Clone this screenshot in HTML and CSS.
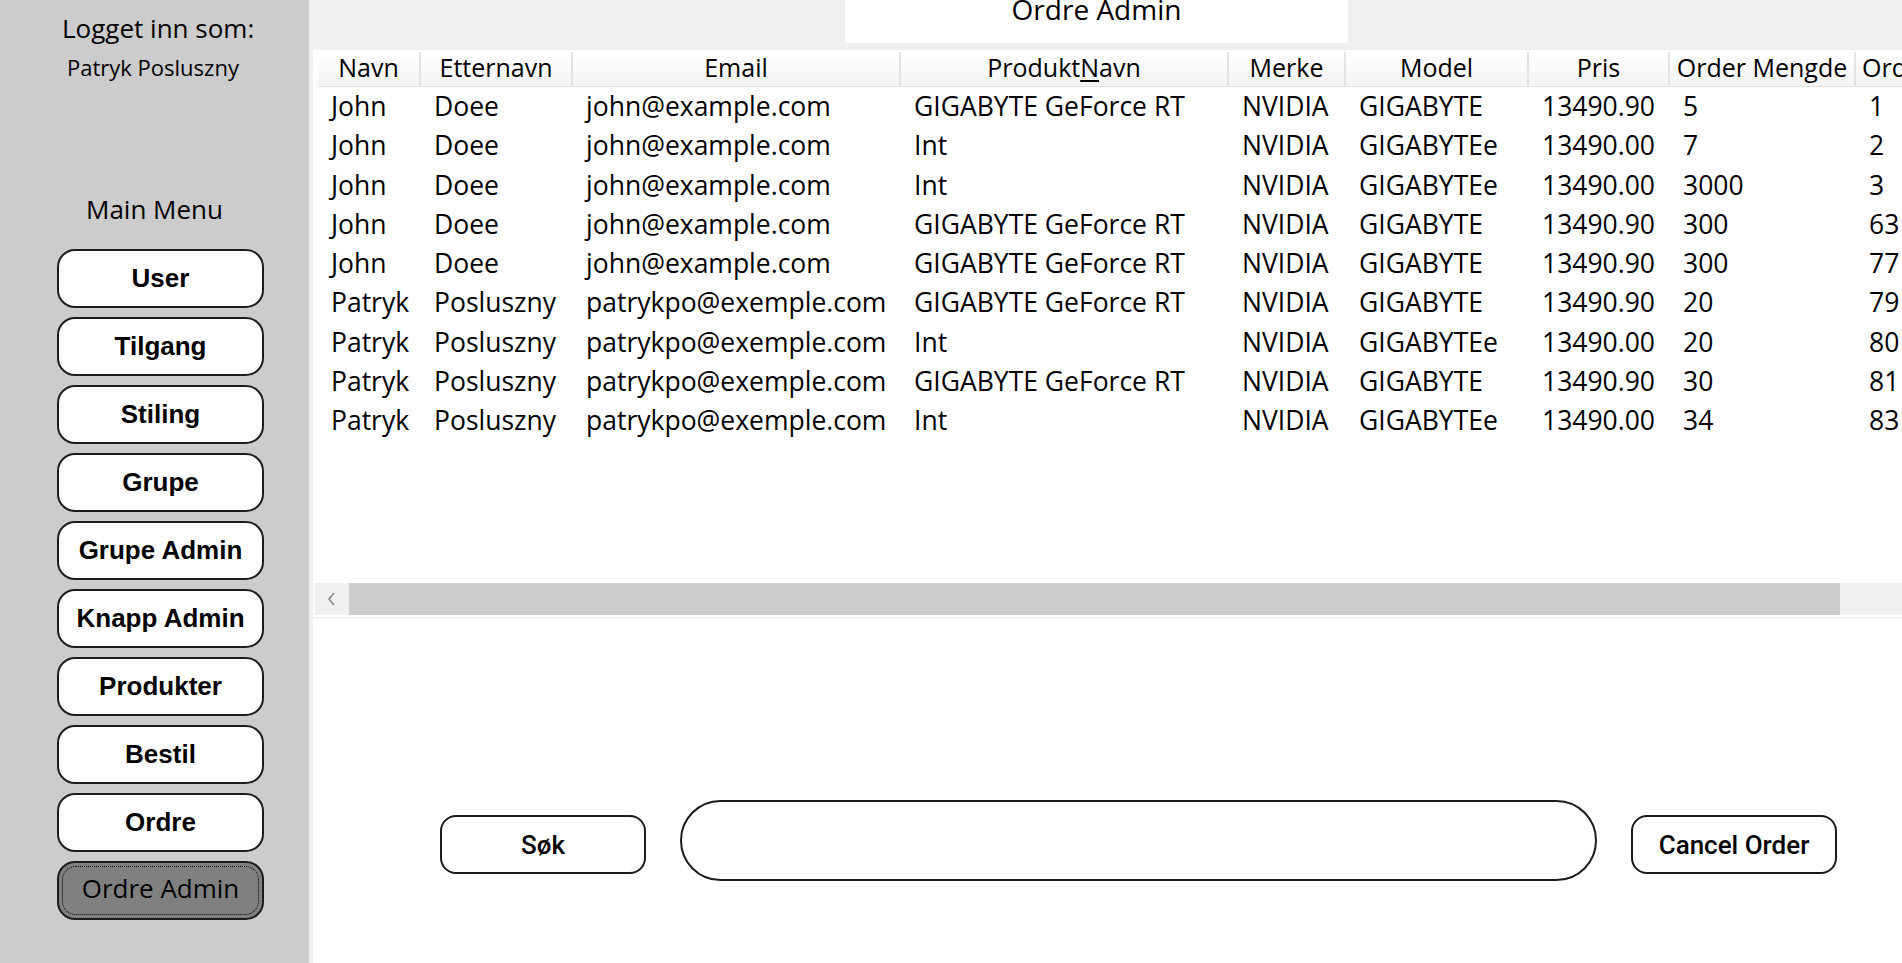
FILE: index.html
```html
<!DOCTYPE html>
<html lang="no">
<head>
<meta charset="utf-8">
<title>Ordre Admin</title>
<link rel="stylesheet" href="styles.css">
</head>
<body>
<div class="app">
  <aside class="sidebar">
    <div class="logged">Logget inn som:</div>
    <div class="username">Patryk Posluszny</div>
    <div class="menu-title">Main Menu</div>
    <nav class="menu">
      <button class="menu-btn">User</button>
      <button class="menu-btn">Tilgang</button>
      <button class="menu-btn">Stiling</button>
      <button class="menu-btn">Grupe</button>
      <button class="menu-btn">Grupe Admin</button>
      <button class="menu-btn">Knapp Admin</button>
      <button class="menu-btn">Produkter</button>
      <button class="menu-btn">Bestil</button>
      <button class="menu-btn">Ordre</button>
      <button class="menu-btn active">Ordre Admin</button>
    </nav>
  </aside>
  <main class="main">
    <div class="topbar">
      <div class="title">Ordre Admin</div>
    </div>
    <div class="grid">
      <div class="row head">
        <div class="hc">Navn</div>
        <div class="hc">Etternavn</div>
        <div class="hc">Email</div>
        <div class="hc">Produkt<u>N</u>avn</div>
        <div class="hc">Merke</div>
        <div class="hc">Model</div>
        <div class="hc">Pris</div>
        <div class="hc">Order Mengde</div>
        <div class="hc last">Ordre ID</div>
      </div>
      <div class="row"><div class="c">John</div><div class="c">Doee</div><div class="c">john@example.com</div><div class="c">GIGABYTE GeForce RT</div><div class="c">NVIDIA</div><div class="c">GIGABYTE</div><div class="c">13490.90</div><div class="c">5</div><div class="c">1</div></div>
      <div class="row"><div class="c">John</div><div class="c">Doee</div><div class="c">john@example.com</div><div class="c">Int</div><div class="c">NVIDIA</div><div class="c">GIGABYTEe</div><div class="c">13490.00</div><div class="c">7</div><div class="c">2</div></div>
      <div class="row"><div class="c">John</div><div class="c">Doee</div><div class="c">john@example.com</div><div class="c">Int</div><div class="c">NVIDIA</div><div class="c">GIGABYTEe</div><div class="c">13490.00</div><div class="c">3000</div><div class="c">3</div></div>
      <div class="row"><div class="c">John</div><div class="c">Doee</div><div class="c">john@example.com</div><div class="c">GIGABYTE GeForce RT</div><div class="c">NVIDIA</div><div class="c">GIGABYTE</div><div class="c">13490.90</div><div class="c">300</div><div class="c">63</div></div>
      <div class="row"><div class="c">John</div><div class="c">Doee</div><div class="c">john@example.com</div><div class="c">GIGABYTE GeForce RT</div><div class="c">NVIDIA</div><div class="c">GIGABYTE</div><div class="c">13490.90</div><div class="c">300</div><div class="c">77</div></div>
      <div class="row"><div class="c">Patryk</div><div class="c">Posluszny</div><div class="c">patrykpo@exemple.com</div><div class="c">GIGABYTE GeForce RT</div><div class="c">NVIDIA</div><div class="c">GIGABYTE</div><div class="c">13490.90</div><div class="c">20</div><div class="c">79</div></div>
      <div class="row"><div class="c">Patryk</div><div class="c">Posluszny</div><div class="c">patrykpo@exemple.com</div><div class="c">Int</div><div class="c">NVIDIA</div><div class="c">GIGABYTEe</div><div class="c">13490.00</div><div class="c">20</div><div class="c">80</div></div>
      <div class="row"><div class="c">Patryk</div><div class="c">Posluszny</div><div class="c">patrykpo@exemple.com</div><div class="c">GIGABYTE GeForce RT</div><div class="c">NVIDIA</div><div class="c">GIGABYTE</div><div class="c">13490.90</div><div class="c">30</div><div class="c">81</div></div>
      <div class="row"><div class="c">Patryk</div><div class="c">Posluszny</div><div class="c">patrykpo@exemple.com</div><div class="c">Int</div><div class="c">NVIDIA</div><div class="c">GIGABYTEe</div><div class="c">13490.00</div><div class="c">34</div><div class="c">83</div></div>
      <div class="hscroll">
        <div class="arrow-box">
          <svg width="12" height="16" viewBox="0 0 12 16"><polyline points="8,2 3,8 8,14" fill="none" stroke="#8a8a8a" stroke-width="1.6"/></svg>
        </div>
        <div class="thumb"></div>
        <div class="track"></div>
        <div class="arrow-box">
          <svg width="12" height="16" viewBox="0 0 12 16"><polyline points="4,2 9,8 4,14" fill="none" stroke="#8a8a8a" stroke-width="1.6"/></svg>
        </div>
      </div>
    </div>
    <div class="controls">
      <button class="act-btn">Søk</button>
      <input class="search" type="text" aria-label="Søk">
      <button class="act-btn">Cancel Order</button>
    </div>
  </main>
</div>
</body>
</html>
```

FILE: styles.css
```css
html, body {
  margin: 0;
  padding: 0;
  width: 1902px;
  height: 963px;
  overflow: hidden;
  background: #ffffff;
}

.app {
  display: flex;
  width: 1902px;
  height: 963px;
}

.sidebar {
  width: 309px;
  flex: none;
  background: #cccccc;
  padding-top: 15px;
  box-sizing: border-box;
  font-family: "Open Sans", "Liberation Sans", sans-serif;
  color: #000;
}

.logged {
  font-size: 26px;
  line-height: 26px;
  padding-left: 62px;
}

.username {
  font-size: 22px;
  line-height: 22px;
  padding-left: 67px;
  margin-top: 15px;
}

.menu-title {
  font-size: 26px;
  line-height: 26px;
  padding-left: 86px;
  margin-top: 118px;
}

.menu {
  display: flex;
  flex-direction: column;
  gap: 9px;
  margin-top: 27px;
  padding-left: 57px;
}

.menu-btn {
  position: relative;
  width: 207px;
  height: 59px;
  box-sizing: border-box;
  border: 2px solid #1c1c1c;
  border-radius: 18px;
  background: #ffffff;
  font-family: "Liberation Sans", Arial, sans-serif;
  font-weight: bold;
  font-size: 26px;
  color: #000;
  padding: 0;
  display: flex;
  align-items: center;
  justify-content: center;
}

.menu-btn.active {
  background: #808080;
  font-family: "Open Sans", "Liberation Sans", sans-serif;
  font-weight: 500;
  padding-bottom: 5px;
}

.menu-btn.active::after {
  content: "";
  position: absolute;
  top: 3px;
  left: 3px;
  right: 3px;
  bottom: 3px;
  border: 1.5px dotted #000;
  border-radius: 14px;
}

.main {
  flex: 1;
  min-width: 0;
  overflow: hidden;
  border-left: 4px solid #f0f0f0;
  background: #ffffff;
  display: flex;
  flex-direction: column;
  font-family: "Open Sans", "Liberation Sans", sans-serif;
}

.topbar {
  height: 50px;
  flex: none;
  background: #f0f0f0;
}

.title {
  width: 503px;
  height: 43px;
  margin-left: 532px;
  background: #ffffff;
  text-align: center;
  font-size: 28px;
  line-height: 18px;
  color: #000;
}

.grid {
  height: 569px;
  flex: none;
  box-sizing: border-box;
  border-bottom: 2px solid #f0f0f0;
  padding-top: 2px;
  display: flex;
  flex-direction: column;
  width: 1640px;
}

.row {
  display: grid;
  grid-template-columns: 103px 152px 328px 328px 117px 183px 141px 186px 200px;
  margin-left: 5px;
  height: 39.3px;
  flex: none;
}

.row.head {
  height: 35px;
  background: linear-gradient(#ffffff, #f4f4f4);
  border-bottom: 1px solid #e2e2e2;
  box-sizing: border-box;
}

.hc {
  font-size: 25px;
  line-height: 31px;
  text-align: center;
  white-space: nowrap;
  border-right: 2px solid #e3e3e3;
  color: #000;
}

.hc.last {
  text-align: left;
  padding-left: 6px;
  border-right: none;
}

.hc u {
  text-decoration-thickness: 2px;
  text-underline-offset: 3px;
}

.c {
  font-size: 26.5px;
  line-height: 39.3px;
  padding-left: 13px;
  white-space: nowrap;
  overflow: hidden;
  color: #000;
}

.hscroll {
  margin-top: auto;
  margin-bottom: 2px;
  margin-left: 2px;
  height: 32px;
  display: flex;
  flex: none;
}

.arrow-box {
  width: 34px;
  flex: none;
  background: #f0f0f0;
  display: flex;
  align-items: center;
  justify-content: center;
}

.thumb {
  width: 1491px;
  flex: none;
  background: #cdcdcd;
}

.track {
  flex: 1;
  background: #f0f0f0;
}

.controls {
  display: flex;
  align-items: center;
  margin-top: 189px;
  padding-left: 127px;
  gap: 34px;
}

.act-btn {
  width: 206px;
  height: 59px;
  box-sizing: border-box;
  border: 2px solid #1c1c1c;
  border-radius: 16px;
  background: #ffffff;
  font-family: Roboto, "Liberation Sans", sans-serif;
  font-weight: 500;
  font-size: 26px;
  color: #000;
  padding: 0;
}

.search {
  width: 917px;
  height: 81px;
  box-sizing: border-box;
  border: 2px solid #1c1c1c;
  border-radius: 41px;
  background: #ffffff;
  margin-top: -8px;
  outline: none;
}
```
